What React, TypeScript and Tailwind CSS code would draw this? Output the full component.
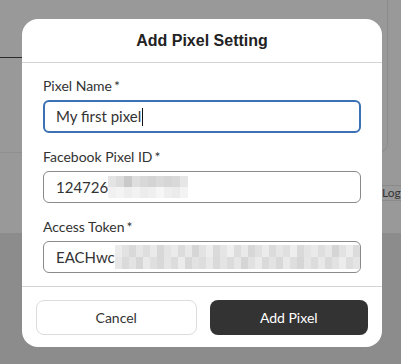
import React from 'react';

// pixelated placeholders for the masked values
const ID_TOP = ['bg-[#e4e4e4]', 'bg-[#dcdcdc]', 'bg-[#c9c9c9]', 'bg-[#dedede]', 'bg-[#d8d8d8]', 'bg-[#d4d4d4]', 'bg-[#dadada]', 'bg-[#d6d6d6]', 'bg-[#d9d9d9]', 'bg-[#e6e6e6]'];
const ID_BOT = ['bg-[#f1f1f1]', 'bg-[#f4f4f4]', 'bg-[#eeeeee]', 'bg-[#f2f2f2]', 'bg-[#ececec]', 'bg-[#efefef]', 'bg-[#f6f6f6]', 'bg-[#eeeeee]', 'bg-[#ebebeb]', 'bg-[#f3f3f3]'];
const TOK_TOP = ['bg-[#ececec]', 'bg-[#e2e2e2]', 'bg-[#d9d9d9]', 'bg-[#e6e6e6]', 'bg-[#dedede]', 'bg-[#eaeaea]', 'bg-[#d8d8d8]', 'bg-[#e4e4e4]', 'bg-[#ebebeb]', 'bg-[#dcdcdc]', 'bg-[#e8e8e8]', 'bg-[#d6d6d6]', 'bg-[#e3e3e3]', 'bg-[#ededed]', 'bg-[#dadada]', 'bg-[#e5e5e5]', 'bg-[#efefef]', 'bg-[#dddddd]', 'bg-[#e9e9e9]', 'bg-[#d7d7d7]', 'bg-[#e1e1e1]', 'bg-[#ebebeb]', 'bg-[#dbdbdb]', 'bg-[#e6e6e6]', 'bg-[#e0e0e0]', 'bg-[#eeeeee]', 'bg-[#d9d9d9]', 'bg-[#e4e4e4]', 'bg-[#eaeaea]', 'bg-[#dedede]', 'bg-[#e7e7e7]', 'bg-[#d5d5d5]', 'bg-[#e2e2e2]', 'bg-[#ececec]', 'bg-[#dcdcdc]'];
const TOK_BOT = ['bg-[#e7e7e7]', 'bg-[#dadada]', 'bg-[#e3e3e3]', 'bg-[#d6d6d6]', 'bg-[#e9e9e9]', 'bg-[#dfdfdf]', 'bg-[#d8d8d8]', 'bg-[#e5e5e5]', 'bg-[#dcdcdc]', 'bg-[#ebebeb]', 'bg-[#d7d7d7]', 'bg-[#e2e2e2]', 'bg-[#dddddd]', 'bg-[#e8e8e8]', 'bg-[#d9d9d9]', 'bg-[#e4e4e4]', 'bg-[#dbdbdb]', 'bg-[#e6e6e6]', 'bg-[#d5d5d5]', 'bg-[#e1e1e1]', 'bg-[#eaeaea]', 'bg-[#dadada]', 'bg-[#e3e3e3]', 'bg-[#d8d8d8]', 'bg-[#e9e9e9]', 'bg-[#dedede]', 'bg-[#d6d6d6]', 'bg-[#e5e5e5]', 'bg-[#dcdcdc]', 'bg-[#e8e8e8]', 'bg-[#d9d9d9]', 'bg-[#e2e2e2]', 'bg-[#ececec]', 'bg-[#dddddd]', 'bg-[#e4e4e4]'];

function Pixels({ top, bottom, cell }: { top: string[]; bottom: string[]; cell: string }) {
  return (
    <div className="flex flex-col">
      <div className="flex">
        {top.map((c, i) => (
          <div key={i} className={`${cell} ${c}`} />
        ))}
      </div>
      <div className="flex">
        {bottom.map((c, i) => (
          <div key={i} className={`${cell} ${c}`} />
        ))}
      </div>
    </div>
  );
}

function Field({ label, children, focused }: { label: string; children: React.ReactNode; focused?: boolean }) {
  return (
    <div className="flex flex-col gap-1">
      <label className="text-[14px] leading-5 text-[#333]">
        {label}
        <span className="ml-[2px]">*</span>
      </label>
      <div
        className={
          focused
            ? 'flex h-[33px] items-center rounded-md border-2 border-[#3a72b3] pl-[11px] text-[15px] text-[#333]'
            : 'flex h-[32px] items-center rounded-md border border-[#8a8a8a] pl-3 text-[15px] text-[#333]'
        }
      >
        {children}
      </div>
    </div>
  );
}

export default function App() {
  return (
    <div
      className="relative h-[364px] w-[401px] overflow-hidden"
      style={{ fontFamily: 'Lato, "Noto Sans", sans-serif' }}
    >
      {/* page behind the overlay */}
      <div className="flex h-full flex-col">
        <div className="relative h-[233px] bg-[#999999]">
          <div className="absolute left-0 top-[57px] h-px w-[22px] bg-[#2b2b2b]" />
          <div className="absolute left-0 top-[152px] h-px w-[22px] bg-[#8f8f8f]" />
          <div className="absolute right-[13px] top-[-10px] h-[162px] w-[40px] rounded-br-[8px] border-b border-r border-[#8c8c8c]" />
          <div className="absolute left-[370px] top-[185px] flex h-[16px] w-[40px] items-center border-y border-[#8a8a8a] pl-[12px] text-[12px] text-[#333]">
            Log
          </div>
        </div>
        <div className="flex-1 bg-[#8c8c8c]" />
      </div>

      {/* modal */}
      <div className="absolute left-[22px] top-[19px] flex w-[360px] flex-col rounded-2xl bg-white">
        <div className="flex h-[44px] items-center justify-center border-b border-[#d4d4d4]">
          <h2
            className="text-[16px] font-bold text-[#222]"
            style={{ fontFamily: '"Liberation Sans", Arial, sans-serif' }}
          >
            Add Pixel Setting
          </h2>
        </div>

        <div className="flex flex-col gap-[14px] border-b border-[#d4d4d4] px-[21px] pb-[13px] pt-[13px]">
          <Field label="Pixel Name" focused>
            <span>My first pixel</span>
            <span className="ml-px h-[18px] w-px bg-[#111]" />
          </Field>
          <Field label="Facebook Pixel ID">
            <span>124726</span>
            <Pixels top={ID_TOP} bottom={ID_BOT} cell="h-[11px] w-[8px]" />
          </Field>
          <Field label="Access Token">
            <span>EACHwc</span>
            <Pixels top={TOK_TOP} bottom={TOK_BOT} cell="h-[12px] w-[7px]" />
          </Field>
        </div>

        <div className="flex gap-[13px] px-[14px] pb-[12px] pt-[13px]">
          <button className="h-[35px] flex-1 rounded-lg border border-[#dcdcdc] bg-white text-[14px] text-[#333]">
            Cancel
          </button>
          <button className="h-[35px] flex-1 rounded-lg bg-[#333333] text-[14px] text-white">
            Add Pixel
          </button>
        </div>
      </div>
    </div>
  );
}
